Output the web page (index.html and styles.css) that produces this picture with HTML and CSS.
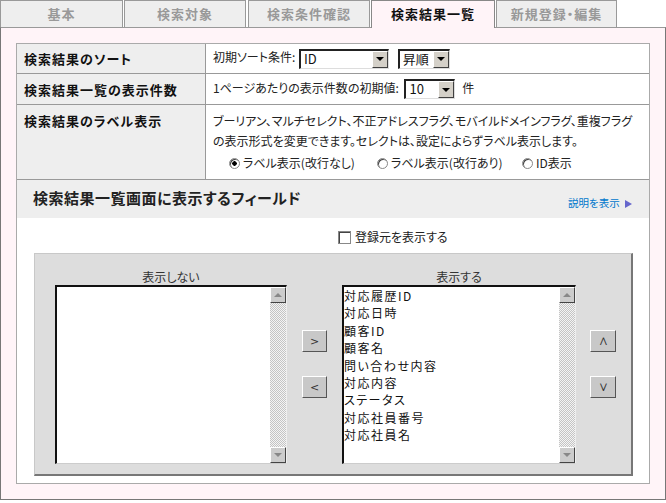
FILE: index.html
```html
<!DOCTYPE html>
<html lang="ja">
<head>
  <meta charset="UTF-8" />
  <title>検索結果一覧</title>
  <link rel="stylesheet" href="styles.css">
</head>
<body>
  <div class="tabs">
    <div class="tab t1">基本</div>
    <div class="tab">検索対象</div>
    <div class="tab">検索条件確認</div>
    <div class="tab active">検索結果一覧</div>
    <div class="tab t5">新規登録・編集</div>
  </div>
  <div class="panel">
    <div class="box">
      <table class="settings">
        <tr class="r1">
          <th>検索結果のソート</th>
          <td>初期ソート条件:
            <span class="sel sel-id"><span class="val">ID</span><span class="drop"></span></span>
            <span class="sel sel-order"><span class="val">昇順</span><span class="drop"></span></span>
          </td>
        </tr>
        <tr class="r2">
          <th>検索結果一覧の表示件数</th>
          <td>1ページあたりの表示件数の初期値:
            <span class="sel sel-count"><span class="val">10</span><span class="drop"></span></span>
            <span class="unit">件</span>
          </td>
        </tr>
        <tr class="r3">
          <th>検索結果のラベル表示</th>
          <td>
            ブーリアン、マルチセレクト、不正アドレスフラグ、モバイルドメインフラグ、重複フラグ<br>
            の表示形式を変更できます。セレクトは、設定によらずラベル表示します。
            <div class="radios">
              <label class="opt o1"><span class="radio on"></span>ラベル表示(改行なし)</label>
              <label class="opt o2"><span class="radio"></span>ラベル表示(改行あり)</label>
              <label class="opt"><span class="radio"></span>ID表示</label>
            </div>
          </td>
        </tr>
      </table>

      <div class="fields-head">
        <h2>検索結果一覧画面に表示するフィールド</h2>
        <a class="help" href="#">説明を表示 <span class="tri"></span></a>
      </div>

      <div class="origin">
        <label><span class="cb"></span>登録元を表示する</label>
      </div>

      <div class="picker">
        <div class="col col-left">
          <div class="col-title">表示しない</div>
          <div class="listbox">
            <ul class="items"></ul>
            <div class="sb"><span class="sb-btn up"></span><span class="sb-track"></span><span class="sb-btn down"></span></div>
          </div>
        </div>
        <div class="move">
          <button>&gt;</button>
          <button>&lt;</button>
        </div>
        <div class="col col-right">
          <div class="col-title">表示する</div>
          <div class="listbox">
            <ul class="items">
              <li>対応履歴ID</li>
              <li>対応日時</li>
              <li>顧客ID</li>
              <li>顧客名</li>
              <li>問い合わせ内容</li>
              <li>対応内容</li>
              <li>ステータス</li>
              <li>対応社員番号</li>
              <li>対応社員名</li>
            </ul>
            <div class="sb"><span class="sb-btn up"></span><span class="sb-track"></span><span class="sb-btn down"></span></div>
          </div>
        </div>
        <div class="move move-order">
          <button>∧</button>
          <button>∨</button>
        </div>
      </div>
    </div>
  </div>
</body>
</html>
```

FILE: styles.css
```css
body {
  margin: 0;
  font-family: "Noto Sans CJK JP", "Noto Sans", sans-serif;
  font-feature-settings: "palt";
  font-size: 12px;
  color: #222;
  background: #fff;
  width: 666px;
}
.tabs {
  display: flex;
  gap: 2px;
  height: 27px;
  align-items: flex-start;
}
.tab {
  box-sizing: border-box;
  width: 122px;
  height: 27px;
  border: 1px solid #999;
  border-bottom: none;
  background: #eee;
  color: #999;
  font-weight: bold;
  font-size: 13px;
  letter-spacing: 1px;
  text-align: center;
  line-height: 25px;
}
.tab.t1 { width: 123px; margin-right: -1px; }
.tab.active {
  position: relative;
  z-index: 1;
  width: 124px;
  height: 28px;
  margin-left: -1px;
  background: #fff4f8;
  border-color: #888;
  color: #111;
}
.tab.t5 { width: 121px; margin-left: -1px; }
.panel {
  border: 1px solid #777;
  border-top-color: #999;
  background: #fff4f8;
  padding: 15px;
}
.box {
  border: 1px solid #aaa;
  background: #fff;
}
.settings {
  width: 100%;
  border-collapse: collapse;
}
.settings th, .settings td {
  border-bottom: 1px solid #999;
  padding: 0 7px;
  text-align: left;
}
.settings th {
  width: 174px;
  background: #eee;
  border-right: 1px solid #999;
  font-size: 13px;
  letter-spacing: 1px;
  color: #111;
}
.r1 th, .r1 td { height: 29px; }
.r2 th, .r2 td { height: 30px; }
.r3 th, .r3 td {
  vertical-align: top;
  line-height: 20px;
  padding-top: 6px;
  padding-bottom: 6px;
}
.sel {
  display: inline-flex;
  vertical-align: middle;
  box-sizing: border-box;
  height: 20px;
  border-style: solid;
  border-width: 2px 1px 1px 2px;
  border-color: #222 #ddd #ddd #222;
  background: #fff;
  font-size: 13px;
  line-height: 16px;
  color: #111;
  margin-left: 1px;
}
.sel-id { width: 90px; }
.sel-order { width: 52px; margin-left: 6px; }
.sel-count { width: 51px; margin-left: 3px; }
.sel .val {
  flex: 1;
  padding-left: 3px;
}
.sel .drop {
  width: 16px;
  box-sizing: border-box;
  background: #d4d0c8;
  border: 1px solid;
  border-color: #fff #404040 #404040 #fff;
  display: flex;
  align-items: center;
  justify-content: center;
}
.sel .drop::after {
  content: "";
  border-left: 4px solid transparent;
  border-right: 4px solid transparent;
  border-top: 4px solid #000;
}
.unit { margin-left: 4px; }
.radios {
  margin-top: 2px;
  padding-left: 16px;
  display: flex;
}
.opt.o1 { width: 148px; }
.opt.o2 { width: 145px; }
.radio {
  display: inline-block;
  box-sizing: border-box;
  width: 11px;
  height: 11px;
  border-radius: 50%;
  border: 1px solid #888;
  box-shadow: inset 1px 1px 0 #444;
  background: #fff;
  vertical-align: -1px;
  margin-right: 3px;
}
.radio.on {
  background: radial-gradient(circle, #000 0 2px, #fff 2.5px);
}
.fields-head {
  box-sizing: border-box;
  height: 38px;
  background: #eee;
  display: flex;
  justify-content: space-between;
  align-items: flex-start;
  padding: 8px 17px 0 16px;
}
.fields-head h2 {
  margin: 0;
  font-size: 15px;
  letter-spacing: 0.5px;
  line-height: 20px;
  color: #222;
}
.help {
  margin-top: 8px;
  font-size: 10.5px;
  line-height: 14px;
  color: #0077cc;
  text-decoration: none;
}
.help .tri {
  display: inline-block;
  margin-left: 3px;
  border-top: 4px solid transparent;
  border-bottom: 4px solid transparent;
  border-left: 7px solid #6666cc;
  vertical-align: -1px;
}
.origin {
  padding: 11px 0 0 321px;
  line-height: 16px;
  height: 24px;
}
.cb {
  display: inline-block;
  box-sizing: border-box;
  width: 13px;
  height: 13px;
  border: 1px solid #888;
  box-shadow: inset 1px 1px 0 #444;
  background: #fff;
  vertical-align: -2px;
  margin-right: 4px;
}
.picker {
  display: flex;
  margin: 0 16px 7px 17px;
  padding: 14px 15px 10px 20px;
  background: #ddd;
  border-style: solid;
  border-width: 1px 2px 2px 1px;
  border-color: #c8c8c8 #777 #777 #c8c8c8;
}
.col-left { width: 232px; }
.col-right { width: 234px; }
.col-title {
  text-align: center;
  line-height: 17px;
  height: 17px;
  color: #333;
}
.listbox {
  box-sizing: border-box;
  height: 179px;
  display: flex;
  background: #fff;
  border-style: solid;
  border-width: 2px 1px 1px 2px;
  border-color: #111 #eee #ccc #111;
}
.items {
  flex: 1;
  list-style: none;
  margin: 0;
  padding: 0;
  font-size: 12px;
  letter-spacing: 1.5px;
  line-height: 17.4px;
  color: #111;
}
.sb {
  width: 16px;
  display: flex;
  flex-direction: column;
}
.sb-btn {
  box-sizing: border-box;
  height: 16px;
  background: #ccc;
  border: 1px solid;
  border-color: #fff #444 #444 #fff;
  display: flex;
  align-items: center;
  justify-content: center;
}
.sb-btn.up::after {
  content: "";
  border-left: 4px solid transparent;
  border-right: 4px solid transparent;
  border-bottom: 4px solid #888;
}
.sb-btn.down::after {
  content: "";
  border-left: 4px solid transparent;
  border-right: 4px solid transparent;
  border-top: 4px solid #888;
}
.sb-track {
  flex: 1;
  background: repeating-conic-gradient(#c4c4c4 0 25%, #f4f4f4 0 50%) 0 0 / 2px 2px;
}
.move {
  display: flex;
  flex-direction: column;
  gap: 24px;
  padding-top: 62px;
  margin: 0 15px;
}
.move-order { margin: 0 0 0 14px; }
.move button {
  width: 25px;
  height: 22px;
  padding: 0;
  background: #c8c8c8;
  border: 1px solid;
  border-color: #fff #555 #555 #fff;
  font-family: "DejaVu Sans", sans-serif;
  font-size: 11px;
  color: #333;
}
.move-order button {
  width: 26px;
  font-family: "Liberation Sans", sans-serif;
  font-size: 13px;
}
```
